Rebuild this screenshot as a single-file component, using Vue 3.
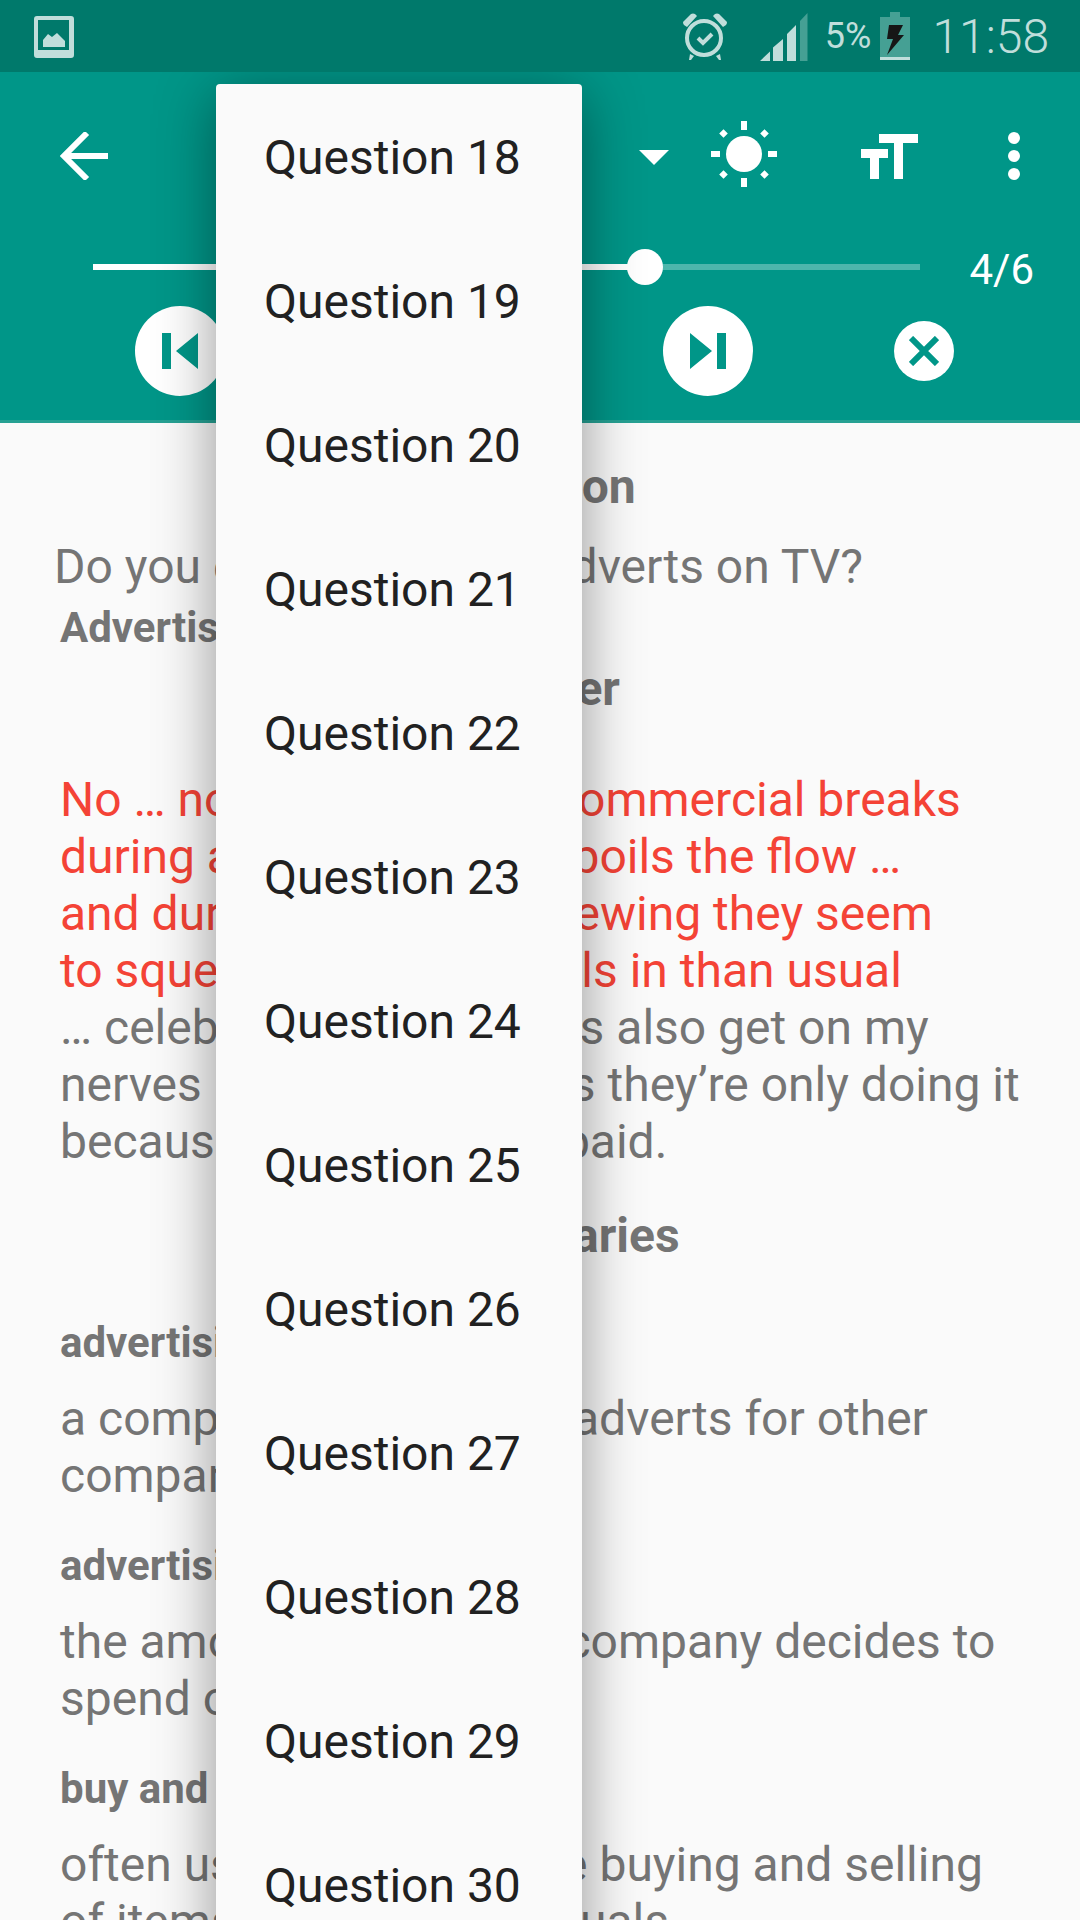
<template>
  <div class="screen">
    <header class="top">
      <div class="status">
        <svg class="gallery" width="40" height="42" viewBox="0 0 40 42">
          <path fill="#c0dedb" fill-rule="evenodd" d="M3 0h34a3 3 0 0 1 3 3v36a3 3 0 0 1-3 3H3a3 3 0 0 1-3-3V3a3 3 0 0 1 3-3zM4 4v30h31V4z"/>
          <path fill="#c0dedb" d="M9 31v-7l5-6 4 3 5-4 8 8v6z"/>
        </svg>
        <span class="grow"></span>
        <svg width="44" height="47" viewBox="0 0 44 47">
          <circle cx="21" cy="25" r="17" fill="none" stroke="#c0dedb" stroke-width="4"/>
          <path fill="none" stroke="#c0dedb" stroke-width="4" d="M15 25l5 5 9-9"/>
          <path fill="#c0dedb" d="M0 9L8 1q2-1 4 0l2 2L4 14 1 12q-1-1-1-3zM44 9l-8-8q-2-1-4 0l-2 2 10 11 3-2q1-1 1-3zM7 41l4 2-3 4H6zM37 41l-4 2 3 4h2z"/>
        </svg>
        <svg class="signal" width="48" height="48" viewBox="0 0 48 48">
          <path fill="#c0dedb" d="M0 48l10-9.500V48zM13 48V34.500L23 26v22zM27 48V21l9-9v36z"/>
          <path fill="#45a094" d="M40 48V8l7.500-8v48z"/>
        </svg>
        <span class="pct">5%</span>
        <svg class="battery" width="30" height="48" viewBox="0 0 30 48">
          <path fill="#45a094" d="M10 0h10v5h10v40H0V5h10z"/>
          <rect x="0" y="45" width="30" height="3" fill="#c0dedb"/>
          <path fill="#161616" d="M9 13h14l-5 10h6L7 43l6-16H7z"/>
        </svg>
        <span class="clock">11:58</span>
      </div>
      <div class="bar">
        <svg class="back" width="48" height="48" viewBox="0 0 48 48">
          <path fill="none" stroke="#fff" stroke-width="6" d="M48 24H4M27 1L4 24l23 23"/>
        </svg>
        <span class="grow"></span>
        <svg class="caret" width="30" height="15" viewBox="0 0 30 15"><path fill="#fff" d="M0 0h30L15 15z"/></svg>
        <svg class="sun" width="66" height="66" viewBox="0 0 66 66">
          <circle cx="33" cy="33" r="18" fill="#fff"/>
          <path fill="#fff" d="M30 0h6v9h-6zM30 57h6v9h-6zM0 30h9v6H0zM57 30h9v6h-9z"/>
          <path fill="#fff" d="M12.500 8.200l4.300 4.300-4.300 4.300-4.300-4.300zM53.500 8.200l4.300 4.300-4.300 4.300-4.300-4.300zM12.500 49.200l4.300 4.300-4.300 4.300-4.300-4.300zM53.500 49.200l4.300 4.300-4.300 4.300-4.300-4.300z"/>
        </svg>
        <svg class="size" width="57" height="45" viewBox="0 0 57 45">
          <path fill="#fff" d="M18 0h39v9H42v36h-9V9H18zM0 15h27v9h-9v21H9V24H0z"/>
        </svg>
        <svg class="more" width="12" height="48" viewBox="0 0 12 48">
          <circle cx="6" cy="6" r="6" fill="#fff"/><circle cx="6" cy="24" r="6" fill="#fff"/><circle cx="6" cy="42" r="6" fill="#fff"/>
        </svg>
      </div>
      <div class="progress">
        <div class="track">
          <div class="fill" :style="{ width: progress + '%' }"></div>
          <div class="thumb" :style="{ left: progress + '%' }"></div>
        </div>
        <span class="count">4/6</span>
      </div>
      <div class="controls">
        <button class="round big prev">
          <svg width="36" height="36" viewBox="0 0 36 36"><path fill="#009688" d="M0 0h9v36H0zM36 0v36L14 18z"/></svg>
        </button>
        <button class="round big next">
          <svg width="36" height="36" viewBox="0 0 36 36"><path fill="#009688" d="M27 0h9v36h-9zM0 0v36l22-18z"/></svg>
        </button>
        <button class="round small">
          <svg width="30" height="30" viewBox="0 0 30 30"><path fill="none" stroke="#009688" stroke-width="6" d="M2 2l26 26M28 2L2 28"/></svg>
        </button>
      </div>
    </header>

    <main class="content">
      <h3 class="title">Question</h3>
      <p class="ask">Do you enjoy watching adverts on TV?</p>
      <p class="tag">Advertisements</p>
      <h3 class="title answer-title">Answer</h3>
      <p class="body">
        <span class="red">No … not really. I dread commercial breaks<br>during a decent film. It spoils the flow …<br>and during prime time viewing they seem<br>to squeeze more ad spiels in than usual</span><br>
        … celebrity endorsements also get on my<br>nerves … it's very obvious they’re only doing it<br>because they are being paid.
      </p>
      <h3 class="title vocab-title">Vocabularies</h3>
      <div v-for="word in vocab" :key="word.term" class="word">
        <p class="term">{{ word.term }}</p>
        <p class="body" v-html="word.text"></p>
      </div>
    </main>

    <ul class="menu">
      <li v-for="n in questions" :key="n">Question {{ n }}</li>
    </ul>
  </div>
</template>

<script setup>
const progress = 66.7
const questions = [18, 19, 20, 21, 22, 23, 24, 25, 26, 27, 28, 29, 30, 31]
const vocab = [
  { term: 'advertising agency', text: 'a company that creates adverts for other<br>companies' },
  { term: 'advertising budget', text: 'the amount of money a company decides to<br>spend on advertising' },
  { term: 'buy and sell', text: 'often used to emphasise buying and selling<br>of items between individuals' },
]
</script>

<style>
html, body { margin: 0; background: #fafafa; }
</style>

<style scoped>
.screen {
  position: relative;
  width: 1080px;
  height: 1920px;
  overflow: hidden;
  background: #fafafa;
  font-family: Roboto, "Liberation Sans", sans-serif;
}
.grow { flex: 1; }
.top {
  background: #009688;
  height: 420px;
  border-bottom: 3px solid #26a193;
}
.status {
  position: relative;
  z-index: 2;
  height: 72px;
  background: #00796b;
  display: flex;
  align-items: center;
  padding: 0 31px 0 34px;
  color: #c0dedb;
}
.gallery { margin-top: 2px; }
.signal { margin-left: 33px; margin-top: 2px; }
.pct { font-size: 36px; margin-left: 17px; }
.battery { margin-left: 9px; }
.clock { font-size: 48px; margin-left: 22px; font-weight: 300; }
.bar {
  display: flex;
  align-items: center;
  height: 100px;
  margin-top: 34px;
  padding: 0 60px;
}
.caret { margin-top: 3px; margin-right: 42px; }
.sun { margin-bottom: 4px; }
.size { margin-left: 84px; }
.more { margin-left: 90px; }
.progress {
  display: flex;
  align-items: center;
  padding: 0 46px 0 93px;
  margin-top: 33px;
}
.track {
  position: relative;
  flex: 1;
  height: 6px;
  background: #4db6ac;
}
.fill { height: 100%; background: #fff; }
.thumb {
  position: absolute;
  top: -15px;
  width: 36px;
  height: 36px;
  margin-left: -18px;
  border-radius: 50%;
  background: #fff;
}
.count {
  color: #fff;
  font-size: 42px;
  margin-left: 49px;
  margin-top: 6px;
}
.controls {
  display: flex;
  align-items: center;
  padding-left: 135px;
  margin-top: 12px;
}
.round {
  display: flex;
  align-items: center;
  justify-content: center;
  border: 0;
  padding: 0;
  border-radius: 50%;
  background: #fff;
}
.big { width: 90px; height: 90px; }
.next { margin-left: 438px; }
.small { width: 60px; height: 60px; margin-left: 141px; }
.content { padding: 0 46px 0 60px; color: #757575; }
.content p, .content h3 { margin: 0; }
.title {
  text-align: center;
  font-size: 48px;
  font-weight: 700;
  line-height: 56px;
  margin-top: 36px !important;
  padding-right: 16px;
}
.ask { font-size: 48px; line-height: 57px; margin: 23px 0 0 -6px !important; }
.tag { font-size: 42px; font-weight: 700; line-height: 50px; margin-top: 8px !important; }
.answer-title { margin-top: 8px !important; }
.body { font-size: 48px; line-height: 57px; }
.answer-title + .body { margin-top: 54px !important; }
.red { color: #f44336; }
.vocab-title { margin-top: 38px !important; }
.word { margin-top: 37px; }
.vocab-title + .word { margin-top: 54px; }
.term { font-size: 42px; font-weight: 700; line-height: 50px; margin-bottom: 22px !important; }
.menu {
  position: absolute;
  z-index: 1;
  left: 216px;
  top: 84px;
  width: 366px;
  margin: 0;
  padding: 0;
  list-style: none;
  background: #fafafa;
  border-radius: 4px 4px 0 0;
  box-shadow: 0 10px 60px rgba(0, 0, 0, 0.42);
  color: #212121;
  font-size: 48px;
}
.menu li {
  height: 144px;
  line-height: 148px;
  padding-left: 48px;
}
</style>
